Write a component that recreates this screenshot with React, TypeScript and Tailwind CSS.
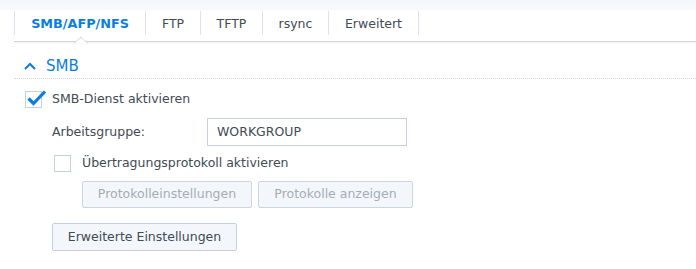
import React from 'react';

const tabs = ['SMB/AFP/NFS', 'FTP', 'TFTP', 'rsync', 'Erweitert'];

function Check({ checked }: { checked?: boolean }) {
  return (
    <span className="relative block w-[17px] h-[17px] border border-[#c6d0da] bg-white shrink-0">
      {checked && (
        <svg className="absolute left-[1px] top-[-2px]" width="20" height="16" viewBox="0 0 20 16">
          <path d="M1.5 8.5 L6.5 13.5 L18 1.5" fill="none" stroke="#0a7ee0" strokeWidth="3.2" />
        </svg>
      )}
    </span>
  );
}

export default function App() {
  return (
    <div className="w-[696px] h-[269px] bg-white overflow-hidden text-[12.5px] text-[#414b55]" style={{ fontFamily: '"DejaVu Sans", Verdana, sans-serif' }}>
      <div className="h-[10px] bg-gradient-to-b from-[#f4f7fc] to-[#f8fafd]" />

      {/* tabs */}
      <div className="ml-[14px] h-[32px] flex items-start border-b border-[#d6d6d6] shadow-[0_1px_2px_rgba(0,0,0,0.06)]">
        {tabs.map((t, i) => (
          <div
            key={t}
            className={`relative h-[24px] mt-[1px] pt-[2px] border-l border-[#dde3ea] flex items-center justify-center ${i === tabs.length - 1 ? 'border-r' : ''} ${i === 0 ? 'w-[131px] font-bold text-[12.8px] text-[#0a7ee0]' : ''} ${i === 1 ? 'w-[55px]' : ''} ${i === 2 ? 'w-[62px]' : ''} ${i === 3 ? 'w-[66px]' : ''} ${i === 4 ? 'w-[91px]' : ''}`}
          >
            {t}
            {i === 0 && (
              <svg className="absolute left-[59px] top-[25px]" width="14" height="8" viewBox="0 0 14 8">
                <path d="M0 7.5 L7 1 L14 7.5" fill="white" stroke="#d6d6d6" strokeWidth="1" />
              </svg>
            )}
          </div>
        ))}
      </div>

      {/* section header */}
      <div className="ml-[14px] h-[37px] border-b border-dotted border-[#d3d9df] flex items-center">
        <svg className="ml-[10px] mt-[12px]" width="12" height="8" viewBox="0 0 12 8">
          <path d="M1 7 L6 2 L11 7" fill="none" stroke="#0a7ee0" strokeWidth="2" />
        </svg>
        <span className="ml-[10px] mt-[12px] text-[15px] text-[#0a7ee0]">SMB</span>
      </div>

      <div className="pl-[25px] pt-[12px]">
        <label className="flex items-center gap-[10px] h-[17px]">
          <Check checked />
          <span>SMB-Dienst aktivieren</span>
        </label>

        <div className="flex items-center mt-[10px] pl-[27px]">
          <span className="w-[155px]">Arbeitsgruppe:</span>
          <div className="w-[200px] h-[28px] border border-[#c5d1dd] flex items-center pl-[9px]">WORKGROUP</div>
        </div>

        <div className="pl-[29px] mt-[8px]">
          <label className="flex items-center gap-[11px] h-[18px]">
            <Check />
            <span>Übertragungsprotokoll aktivieren</span>
          </label>
          <div className="flex gap-[6px] mt-[9px] pl-[28px]">
            <button className="w-[170px] h-[27px] border border-[#ccd6e0] rounded-[2px] bg-[#f3f7fb] text-[#a4adb6]">Protokolleinstellungen</button>
            <button className="w-[155px] h-[27px] border border-[#ccd6e0] rounded-[2px] bg-[#f3f7fb] text-[#a4adb6]">Protokolle anzeigen</button>
          </div>
        </div>

        <div className="pl-[27px] mt-[15px]">
          <button className="w-[185px] h-[28px] border border-[#c5d0dc] rounded-[2px] bg-[#f3f7fb] text-[#414b55]">Erweiterte Einstellungen</button>
        </div>
      </div>
    </div>
  );
}
